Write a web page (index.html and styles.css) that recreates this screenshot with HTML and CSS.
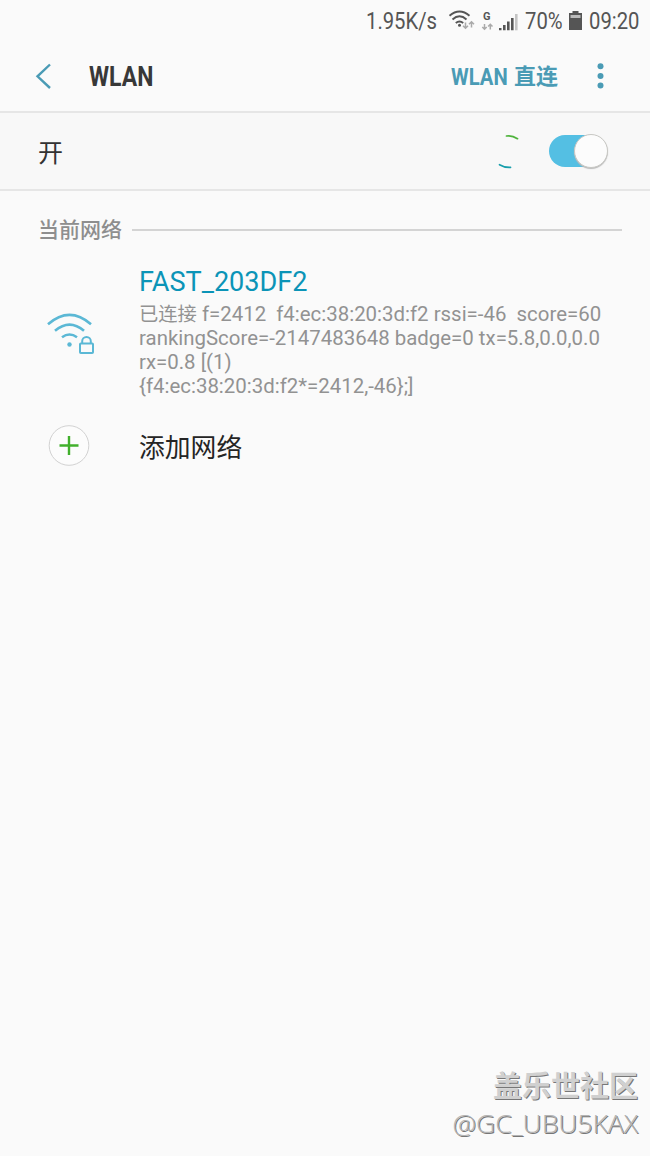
FILE: index.html
```html
<!DOCTYPE html>
<html lang="zh-CN">
<head>
<meta charset="utf-8">
<title>WLAN</title>
<link rel="stylesheet" href="styles.css">
</head>
<body>
<div class="screen">
  <div class="status">
    <div class="speed"><span class="narrow">1.95K/s</span></div>
    <svg class="status-icons" width="74" height="30" viewBox="446 5 74 30" fill="none">
      <g stroke="#555" stroke-width="1.900">
        <path d="M449.500 14.700Q459.500 6.300 469.500 14.700M452.500 18.500Q459.500 12.200 466.500 18.500M455.800 22Q459.500 18.800 463.200 22"/>
      </g>
      <circle cx="459.500" cy="24.300" r="1.500" fill="#555"/>
      <g stroke="#aaa" stroke-width="1.500">
        <path d="M465.500 21.500v5.500M463 24.700l2.500 2.500 2.500-2.500M471.500 26.500v-5.500M469 23.300l2.500-2.500 2.500 2.500"/>
        <path d="M484.500 23v5M482.300 26l2.200 2.200 2.200-2.200M490.300 28.500v-5M488.100 25.500l2.200-2.200 2.200 2.200"/>
      </g>
      <text class="carrier" x="483" y="19">G</text>
      <path d="M499 27h2.500v2.300h-2.500zM503 24h2.600v5.300h-2.600zM507 20.500h2.600v8.800h-2.600zM511 17h2.600v12.300h-2.600z" fill="#555"/>
      <path d="M515 13h2.600v16.300h-2.600z" fill="#c4c4c4"/>
    </svg>
    <div class="percent"><span class="narrow">70%</span></div>
    <svg class="battery" width="13" height="20" viewBox="0 0 13 20"><path d="M3.500 0h6v2H13v17H0V2h3.500z" fill="#555"/><path d="M1.500 4h10v3h-10z" fill="#bbb"/></svg>
    <div class="clock"><span class="narrow">09:20</span></div>
  </div>
  <header class="header">
    <svg class="back" width="18" height="28" viewBox="0 0 18 28"><path d="M15 1.500L2.500 13.300L15 25" fill="none" stroke="#4a9bb5" stroke-width="2.400"/></svg>
    <h1 class="title"><span>WLAN</span></h1>
    <div class="direct"><span class="direct-en">WLAN</span><span class="direct-cn">直连</span></div>
    <svg class="more" width="8" height="28" viewBox="0 0 8 28" fill="#4a9bb5"><circle cx="4.500" cy="3.200" r="3"/><circle cx="4.500" cy="12.900" r="3"/><circle cx="4.500" cy="22.500" r="3"/></svg>
  </header>
  <div class="power">
    <span class="power-label">开</span>
    <svg class="spinner" width="24" height="38" viewBox="497 132 24 38" fill="none" stroke-width="1.700" stroke-linecap="round"><path d="M506.500 136Q512 135 517.500 138.700" stroke="#4fb33c"/><path d="M499.500 164.700Q504.500 167.700 510.500 167.400" stroke="#199fac"/></svg>
    <div class="switch"><div class="knob"></div></div>
  </div>
  <main>
    <div class="section"><span>当前网络</span><div class="rule"></div></div>
    <div class="network">
      <svg class="wifi" width="50" height="46" viewBox="46 310 50 46" fill="none" stroke="#5bb8d5" stroke-width="2.600">
        <path d="M48 324.200Q69.500 305.400 91 324.200M55 330.800Q69.500 318.400 84 330.800M62 337.200Q69.500 331.800 77 337.200"/>
        <circle cx="69.500" cy="344.500" r="2.200" fill="#5bb8d5" stroke="none"/>
        <rect x="80" y="343.500" width="13" height="9.500" rx=".8" stroke-width="2"/>
        <path d="M82.200 343.500V341.300a4.300 4.300 0 0 1 8.600 0V343.500" stroke-width="2"/>
      </svg>
      <div class="info">
        <div class="ssid">FAST_203DF2</div>
        <div class="line"><span class="cn">已连接</span> f=2412&nbsp; f4:ec:38:20:3d:f2 rssi=-46&nbsp; score=60</div>
        <div class="line">rankingScore=-2147483648 badge=0 tx=5.8,0.0,0.0</div>
        <div class="line">rx=0.8 [(1)</div>
        <div class="line">{f4:ec:38:20:3d:f2*=2412,-46};]</div>
      </div>
    </div>
    <div class="add">
      <svg width="42" height="42" viewBox="0 0 42 42"><circle cx="21" cy="20.500" r="19.800" fill="#fcfcfc" stroke="#d2d2d2"/><path d="M11.500 20.500h19M21 11v19" stroke="#41b02c" stroke-width="2.400"/></svg>
      <span>添加网络</span>
    </div>
  </main>
  <footer class="mark">
    <div class="mark-name">盖乐世社区</div>
    <div class="mark-user">@GC_UBU5KAX</div>
  </footer>
</div>
</body>
</html>
```
FILE: styles.css
```css
body { margin: 0; background: #fafafa; }
* { box-sizing: border-box; }
.screen {
  width: 650px; height: 1156px; overflow: hidden;
  display: flex; flex-direction: column;
  background: #fafafa; color: #252525;
  font-family: Roboto, "Noto Sans CJK SC", sans-serif;
  white-space: nowrap;
}
svg { display: block; flex: none; }
.status { height: 41px; padding-left: 366px; display: flex; align-items: center; color: #555; font-size: 23px; line-height: 27px; }
.narrow { display: inline-block; padding-top: 2px; transform: scaleX(.88); transform-origin: left; }
.speed { width: 80px; }
.status-icons { margin-right: 5px; }
.carrier { font: bold 11px Roboto, sans-serif; fill: #555; }
.percent { width: 44px; }
.battery { margin-right: 7px; }
.clock { width: 52px; }
.header { height: 72px; padding: 1px 0 0 35px; display: flex; align-items: center; border-bottom: 2px solid #e6e6e6; }
.title { margin: 0 0 0 36px; width: 362px; font-size: 27px; line-height: 32px; font-weight: 700; color: #383838; }
.title span { display: inline-block; transform: scaleX(.85); transform-origin: left; }
.direct { width: 145px; padding-top: 1px; display: flex; align-items: center; color: #4a9bb5; font-weight: 700; line-height: 30px; }
.direct-en { width: 63px; font-size: 23.5px; transform: scaleX(.86); transform-origin: left; }
.direct-cn { font-size: 22px; font-weight: 700; }
.power { height: 78px; padding: 0 42px 0 38px; display: flex; align-items: center; background: #f8f8f8; border-bottom: 2px solid #e6e6e6; }
.power-label { flex: 1; padding-top: 6px; font-size: 25px; line-height: 36px; color: #333; }
.spinner { margin-right: 28px; }
.switch { width: 59px; height: 32px; border-radius: 16px; background: linear-gradient(to right, #54bfe3 42px, transparent 42px); display: flex; align-items: center; justify-content: flex-end; }
.knob { width: 34px; height: 34px; flex: none; border-radius: 50%; background: #fcfcfc; border: 1px solid #c8c8c4; box-shadow: 0 1px 1px #bbb; }
.section { padding: 20px 28px 0 38px; height: 57px; display: flex; align-items: center; gap: 10px; font-size: 21px; line-height: 32px; font-weight: 500; color: #8e8e8e; }
.section span { padding-top: 1px; }
.rule { flex: 1; height: 2px; background: #d4d4d4; }
.network { display: flex; padding: 17px 0 0 46px; height: 161px; }
.wifi { margin: 45px 43px 0 0; }
.ssid { font-size: 27.100px; line-height: 34px; height: 36.500px; color: #0b94b7; }
.line { font-size: 20.430px; height: 24px; line-height: 24px; color: #929292; }
.cn { font-size: 19.300px; }
.add { display: flex; align-items: center; height: 74px; padding-left: 48px; gap: 49px; font-size: 25.800px; line-height: 36px; color: #252525; }
.add span { padding-top: 3px; }
.mark { margin-top: auto; padding-right: 12px; height: 88px; text-align: right; color: #d0d0d0; text-shadow: 1px 1px 0 #777; }
.mark-name { font-size: 29px; line-height: 38px; font-weight: 700; }
.mark-user { margin-top: -2px; font: 300 26.500px/38px "Open Sans", sans-serif; color: #b4b4b4; }
```
